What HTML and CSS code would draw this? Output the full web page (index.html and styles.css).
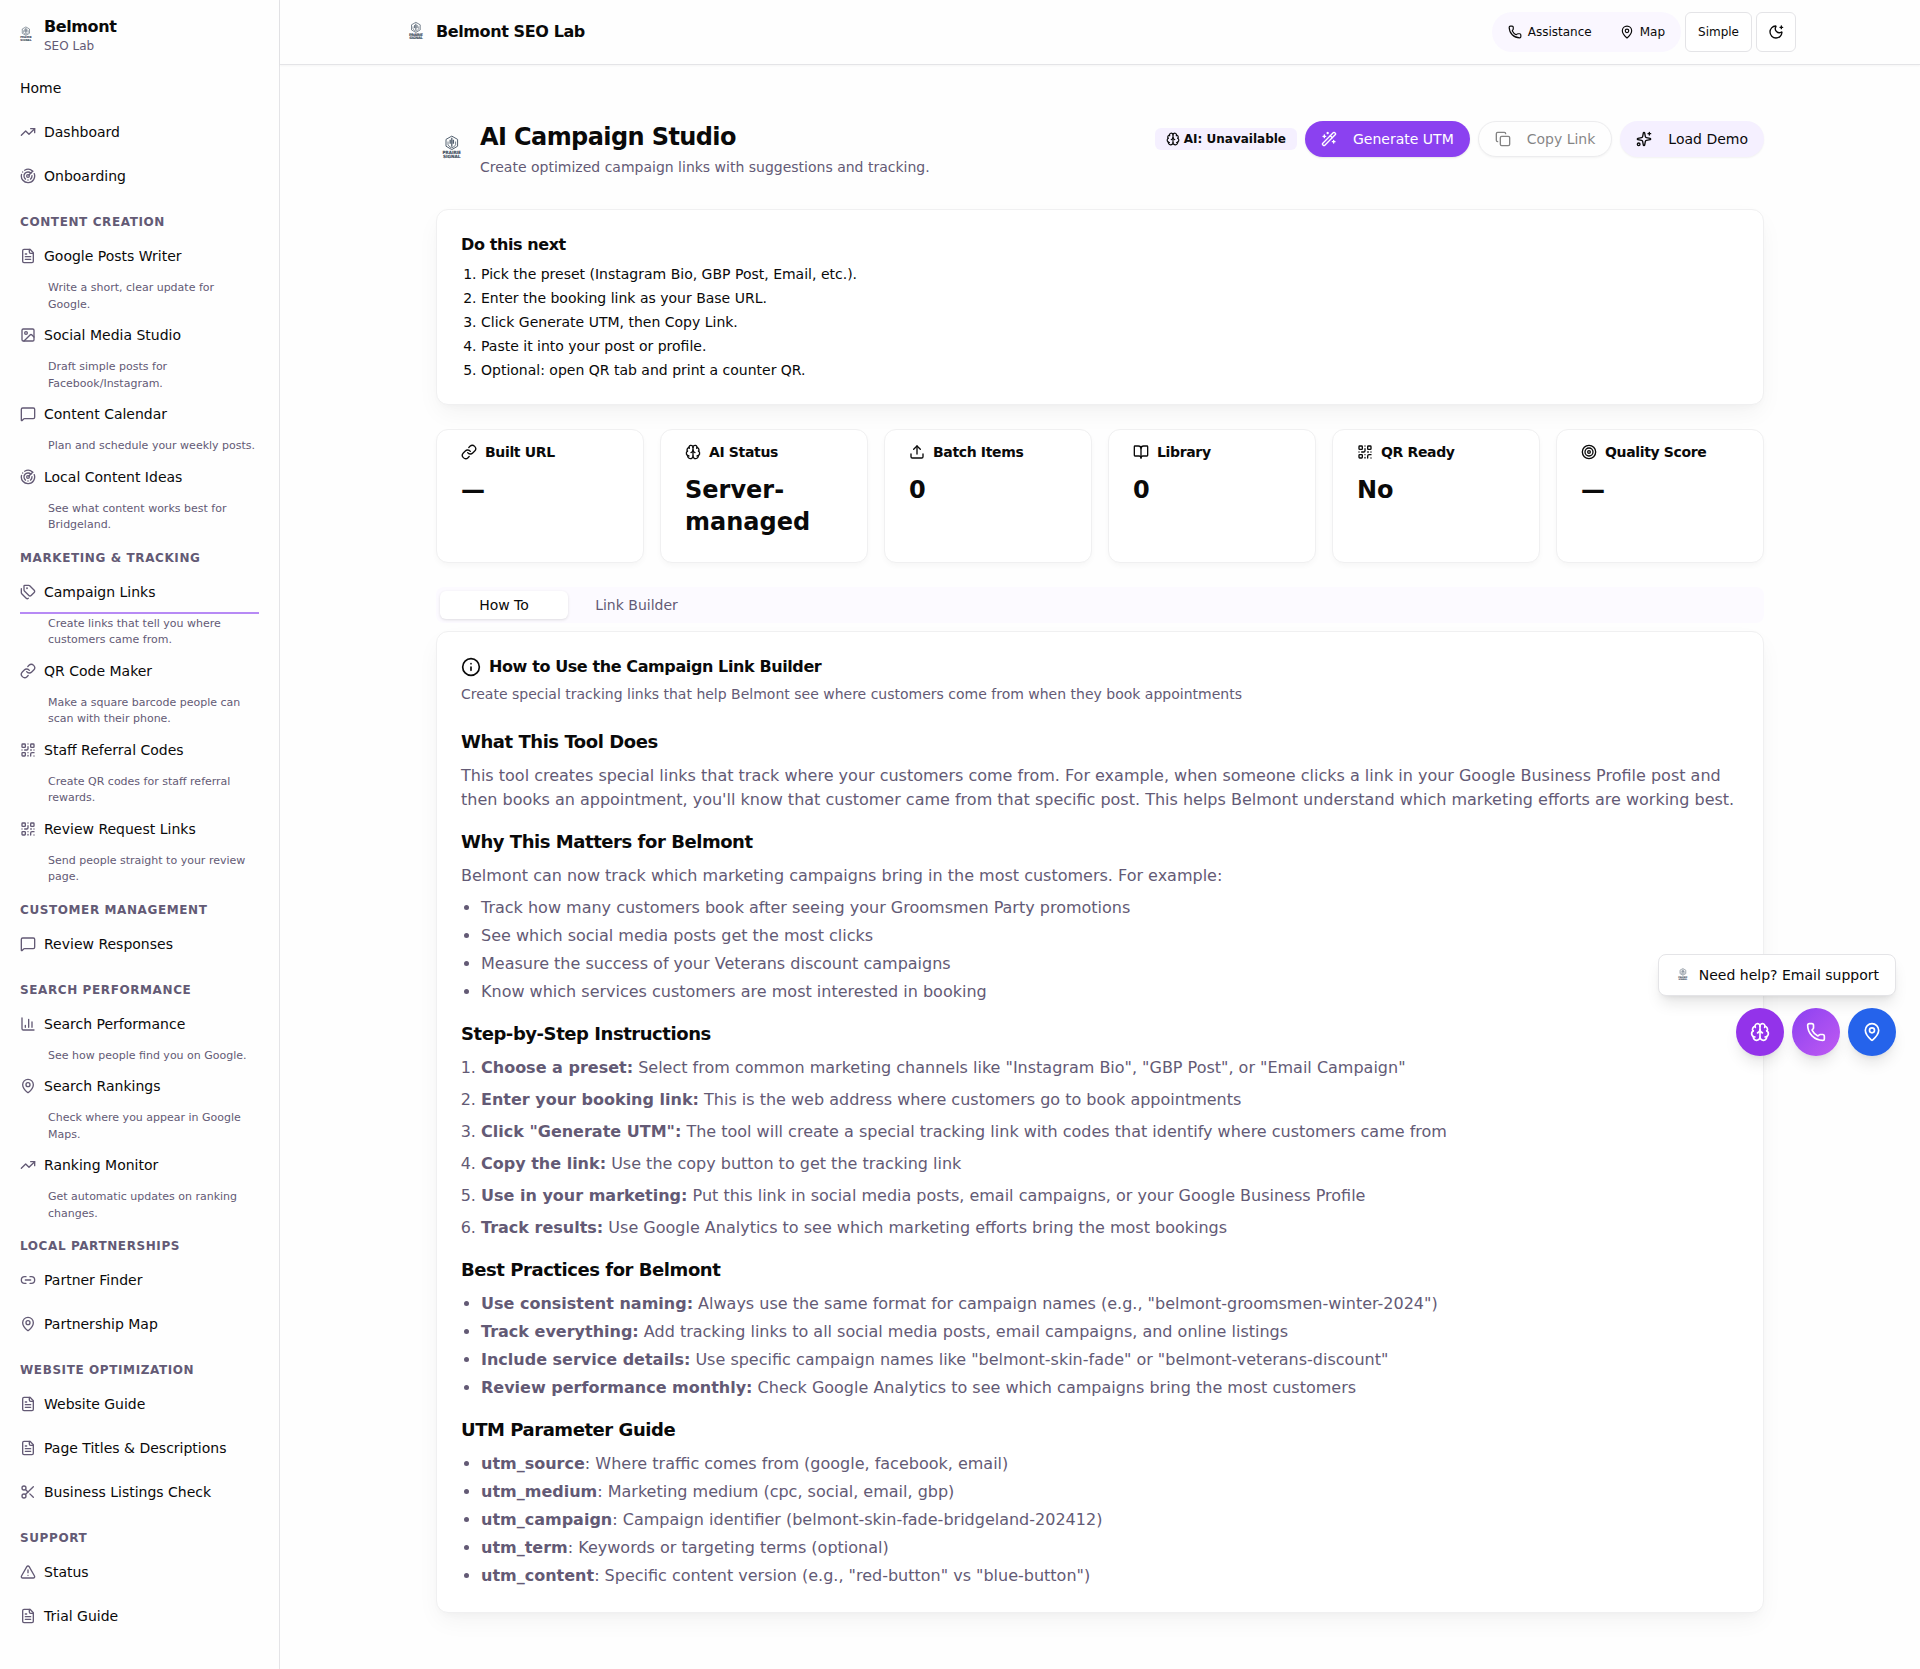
FILE: index.html
```html
<!DOCTYPE html>
<html lang="en">
<head>
<meta charset="utf-8">
<title>AI Campaign Studio - Belmont SEO Lab</title>
<link rel="stylesheet" href="styles.css">
</head>
<body>
<svg class="sprite" aria-hidden="true">
  <symbol id="logo" viewBox="0 0 32 32">
    <g fill="none" stroke="#52606f" stroke-width="1">
      <path d="M15.800 3.100 21.600 6.400v6.800l-5.800 3.400-5.800-3.400V6.400z"/>
      <path d="M15.800 4.800v9M14.200 6.800v4M17.400 6.800v4" stroke-width="1.300"/>
      <path d="M12 8.500v3.300q2 3 3.800 3 2-.2 3.800-3V8.500" stroke-width=".8"/>
    </g>
    <g fill="#3f4d5d" stroke="#3f4d5d" stroke-width=".15" font-family="DejaVu Sans" font-weight="bold" font-size="4.400">
      <text x="6.600" y="21.300" textLength="18.300" lengthAdjust="spacingAndGlyphs">PRAIRIE</text>
      <text x="6.900" y="25.300" textLength="17.700" lengthAdjust="spacingAndGlyphs">SIGNAL</text>
    </g>
  </symbol>
  <symbol id="trend" viewBox="0 0 24 24"><path d="M16 7h6v6"/><path d="m22 7-8.500 8.500-5-5L2 17"/></symbol>
  <symbol id="radar" viewBox="0 0 24 24"><path d="M19.070 4.930A10 10 0 0 0 6.990 3.340"/><path d="M4 6h.01"/><path d="M2.290 9.620A10 10 0 1 0 21.310 8.350"/><path d="M16.240 7.760A6 6 0 1 0 8.230 16.670"/><path d="M12 18h.01"/><path d="M17.990 11.660A6 6 0 0 1 15.770 16.670"/><circle cx="12" cy="12" r="2"/><path d="m13.410 10.590 5.660-5.660"/></symbol>
  <symbol id="file" viewBox="0 0 24 24"><path d="M15 2H6a2 2 0 0 0-2 2v16a2 2 0 0 0 2 2h12a2 2 0 0 0 2-2V7Z"/><path d="M14 2v4a2 2 0 0 0 2 2h4"/><path d="M10 9H8M16 13H8M16 17H8"/></symbol>
  <symbol id="image" viewBox="0 0 24 24"><rect width="18" height="18" x="3" y="3" rx="2"/><circle cx="9" cy="9" r="2"/><path d="m21 15-3.086-3.086a2 2 0 0 0-2.828 0L6 21"/></symbol>
  <symbol id="message" viewBox="0 0 24 24"><path d="M22 17a2 2 0 0 1-2 2H6.828a2 2 0 0 0-1.414.586l-2.202 2.202A.71.71 0 0 1 2 21.286V5a2 2 0 0 1 2-2h16a2 2 0 0 1 2 2z"/></symbol>
  <symbol id="tags" viewBox="0 0 24 24"><path d="M13.172 2a2 2 0 0 1 1.414.586l6.710 6.710a2.400 2.400 0 0 1 0 3.408l-4.592 4.592a2.400 2.400 0 0 1-3.408 0l-6.710-6.710A2 2 0 0 1 6 9.172V3a1 1 0 0 1 1-1z"/><path d="M2 7v6.172a2 2 0 0 0 .586 1.414l6.710 6.710a2.400 2.400 0 0 0 3.191.193"/><circle cx="10.500" cy="6.500" r=".5" fill="currentColor"/></symbol>
  <symbol id="link" viewBox="0 0 24 24"><path d="M10 13a5 5 0 0 0 7.540.54l3-3a5 5 0 0 0-7.070-7.070l-1.720 1.710"/><path d="M14 11a5 5 0 0 0-7.540-.54l-3 3a5 5 0 0 0 7.070 7.070l1.710-1.710"/></symbol>
  <symbol id="qr" viewBox="0 0 24 24"><rect width="5" height="5" x="3" y="3" rx="1"/><rect width="5" height="5" x="16" y="3" rx="1"/><rect width="5" height="5" x="3" y="16" rx="1"/><path d="M21 16h-3a2 2 0 0 0-2 2v3"/><path d="M21 21v.01"/><path d="M12 7v3a2 2 0 0 1-2 2H7"/><path d="M3 12h.01M12 3h.01M12 16v.01M16 12h1M21 12v.01M12 21v-1"/></symbol>
  <symbol id="chart" viewBox="0 0 24 24"><path d="M3 3v16a2 2 0 0 0 2 2h16"/><path d="M18 17V9M13 17V5M8 17v-3"/></symbol>
  <symbol id="pin" viewBox="0 0 24 24"><path d="M20 10c0 4.993-5.539 10.193-7.399 11.799a1 1 0 0 1-1.202 0C9.539 20.193 4 14.993 4 10a8 8 0 0 1 16 0"/><circle cx="12" cy="10" r="3"/></symbol>
  <symbol id="link2" viewBox="0 0 24 24"><path d="M9 17H7A5 5 0 0 1 7 7h2"/><path d="M15 7h2a5 5 0 1 1 0 10h-2"/><path d="M8 12h8"/></symbol>
  <symbol id="scissors" viewBox="0 0 24 24"><circle cx="6" cy="6" r="3"/><path d="M8.120 8.120 12 12"/><path d="M20 4 8.120 15.880"/><circle cx="6" cy="18" r="3"/><path d="M14.800 14.800 20 20"/></symbol>
  <symbol id="alert" viewBox="0 0 24 24"><path d="m21.730 18-8-14a2 2 0 0 0-3.480 0l-8 14A2 2 0 0 0 4 21h16a2 2 0 0 0 1.730-3"/><path d="M12 9v4M12 17h.01"/></symbol>
  <symbol id="phone" viewBox="0 0 24 24"><path d="M13.832 16.568a1 1 0 0 0 1.213-.303l.355-.465A2 2 0 0 1 17 15h3a2 2 0 0 1 2 2v3a2 2 0 0 1-2 2A18 18 0 0 1 2 4a2 2 0 0 1 2-2h3a2 2 0 0 1 2 2v3a2 2 0 0 1-.8 1.600l-.468.351a1 1 0 0 0-.292 1.233 14 14 0 0 0 6.392 6.384"/></symbol>
  <symbol id="moon" viewBox="0 0 24 24"><path d="M18 5h4M20 3v4"/><path d="M20.985 12.486a9 9 0 1 1-9.473-9.472c.405-.022.617.46.402.803a6 6 0 0 0 8.268 8.268c.344-.215.825-.004.803.401"/></symbol>
  <symbol id="brain" viewBox="0 0 24 24"><path d="M12 18V5"/><path d="M15 13a4.170 4.170 0 0 1-3-4 4.170 4.170 0 0 1-3 4"/><path d="M17.598 6.500A3 3 0 1 0 12 5a3 3 0 1 0-5.598 1.500"/><path d="M17.997 5.125a4 4 0 0 1 2.526 5.770"/><path d="M18 18a4 4 0 0 0 2-7.464"/><path d="M19.967 17.483A4 4 0 1 1 12 18a4 4 0 1 1-7.967-.517"/><path d="M6 18a4 4 0 0 1-2-7.464"/><path d="M6.003 5.125a4 4 0 0 0-2.526 5.770"/></symbol>
  <symbol id="wand" viewBox="0 0 24 24"><path d="m21.640 3.640-1.280-1.280a1.210 1.210 0 0 0-1.720 0L2.360 18.640a1.210 1.210 0 0 0 0 1.720l1.280 1.280a1.200 1.200 0 0 0 1.720 0L21.640 5.360a1.200 1.200 0 0 0 0-1.720"/><path d="m14 7 3 3M5 6v4M19 14v4M10 2v2M7 8H3M21 16h-4M11 3H9"/></symbol>
  <symbol id="copy" viewBox="0 0 24 24"><rect width="14" height="14" x="8" y="8" rx="2"/><path d="M4 16c-1.100 0-2-.9-2-2V4c0-1.100.9-2 2-2h10c1.100 0 2 .9 2 2"/></symbol>
  <symbol id="sparkles" viewBox="0 0 24 24"><path d="M11.017 2.814a1 1 0 0 1 1.966 0l1.051 5.558a2 2 0 0 0 1.594 1.594l5.558 1.051a1 1 0 0 1 0 1.966l-5.558 1.051a2 2 0 0 0-1.594 1.594l-1.051 5.558a1 1 0 0 1-1.966 0l-1.051-5.558a2 2 0 0 0-1.594-1.594l-5.558-1.051a1 1 0 0 1 0-1.966l5.558-1.051a2 2 0 0 0 1.594-1.594z"/><path d="M20 2v4M22 4h-4"/><circle cx="4" cy="20" r="2"/></symbol>
  <symbol id="upload" viewBox="0 0 24 24"><path d="M12 3v12"/><path d="m17 8-5-5-5 5"/><path d="M21 15v4a2 2 0 0 1-2 2H5a2 2 0 0 1-2-2v-4"/></symbol>
  <symbol id="book" viewBox="0 0 24 24"><path d="M12 7v14"/><path d="M3 18a1 1 0 0 1-1-1V4a1 1 0 0 1 1-1h5a4 4 0 0 1 4 4 4 4 0 0 1 4-4h5a1 1 0 0 1 1 1v13a1 1 0 0 1-1 1h-6a3 3 0 0 0-3 3 3 3 0 0 0-3-3z"/></symbol>
  <symbol id="target" viewBox="0 0 24 24"><circle cx="12" cy="12" r="10"/><circle cx="12" cy="12" r="6"/><circle cx="12" cy="12" r="2"/></symbol>
  <symbol id="info" viewBox="0 0 24 24"><circle cx="12" cy="12" r="10"/><path d="M12 16v-4M12 8h.01"/></symbol>
</svg>

<div class="app">
  <aside class="sidebar">
    <div class="brand">
      <svg class="logo logo-sm"><use href="#logo"/></svg>
      <div><div class="brand-name">Belmont</div><div class="brand-sub">SEO Lab</div></div>
    </div>
    <nav>
      <a class="nav-link">Home</a>
      <a class="nav-link"><svg class="icon"><use href="#trend"/></svg>Dashboard</a>
      <a class="nav-link"><svg class="icon"><use href="#radar"/></svg>Onboarding</a>

      <h2 class="nav-title">Content Creation</h2>
      <a class="nav-link"><svg class="icon"><use href="#file"/></svg>Google Posts Writer</a>
      <p class="nav-desc">Write a short, clear update for Google.</p>
      <a class="nav-link"><svg class="icon"><use href="#image"/></svg>Social Media Studio</a>
      <p class="nav-desc">Draft simple posts for Facebook/Instagram.</p>
      <a class="nav-link"><svg class="icon"><use href="#message"/></svg>Content Calendar</a>
      <p class="nav-desc">Plan and schedule your weekly posts.</p>
      <a class="nav-link"><svg class="icon"><use href="#radar"/></svg>Local Content Ideas</a>
      <p class="nav-desc">See what content works best for Bridgeland.</p>

      <h2 class="nav-title">Marketing &amp; Tracking</h2>
      <a class="nav-link active"><svg class="icon"><use href="#tags"/></svg>Campaign Links</a>
      <p class="nav-desc">Create links that tell you where customers came from.</p>
      <a class="nav-link"><svg class="icon"><use href="#link"/></svg>QR Code Maker</a>
      <p class="nav-desc">Make a square barcode people can scan with their phone.</p>
      <a class="nav-link"><svg class="icon"><use href="#qr"/></svg>Staff Referral Codes</a>
      <p class="nav-desc">Create QR codes for staff referral rewards.</p>
      <a class="nav-link"><svg class="icon"><use href="#qr"/></svg>Review Request Links</a>
      <p class="nav-desc">Send people straight to your review page.</p>

      <h2 class="nav-title">Customer Management</h2>
      <a class="nav-link"><svg class="icon"><use href="#message"/></svg>Review Responses</a>

      <h2 class="nav-title">Search Performance</h2>
      <a class="nav-link"><svg class="icon"><use href="#chart"/></svg>Search Performance</a>
      <p class="nav-desc">See how people find you on Google.</p>
      <a class="nav-link"><svg class="icon"><use href="#pin"/></svg>Search Rankings</a>
      <p class="nav-desc">Check where you appear in Google Maps.</p>
      <a class="nav-link"><svg class="icon"><use href="#trend"/></svg>Ranking Monitor</a>
      <p class="nav-desc">Get automatic updates on ranking changes.</p>

      <h2 class="nav-title">Local Partnerships</h2>
      <a class="nav-link"><svg class="icon"><use href="#link2"/></svg>Partner Finder</a>
      <a class="nav-link"><svg class="icon"><use href="#pin"/></svg>Partnership Map</a>

      <h2 class="nav-title">Website Optimization</h2>
      <a class="nav-link"><svg class="icon"><use href="#file"/></svg>Website Guide</a>
      <a class="nav-link"><svg class="icon"><use href="#file"/></svg>Page Titles &amp; Descriptions</a>
      <a class="nav-link"><svg class="icon"><use href="#scissors"/></svg>Business Listings Check</a>

      <h2 class="nav-title">Support</h2>
      <a class="nav-link"><svg class="icon"><use href="#alert"/></svg>Status</a>
      <a class="nav-link"><svg class="icon"><use href="#file"/></svg>Trial Guide</a>
    </nav>
  </aside>

  <div class="page">
    <header class="topbar">
      <div class="topbar-inner">
        <div class="topbar-brand"><svg class="logo logo-md"><use href="#logo"/></svg>Belmont SEO Lab</div>
        <div class="topbar-actions">
          <div class="contact-pill">
            <a><svg class="icon"><use href="#phone"/></svg>Assistance</a>
            <a><svg class="icon"><use href="#pin"/></svg>Map</a>
          </div>
          <button class="top-btn">Simple</button>
          <button class="top-btn square"><svg class="icon"><use href="#moon"/></svg></button>
        </div>
      </div>
    </header>

    <main class="content">
      <div class="page-head">
        <svg class="logo logo-lg"><use href="#logo"/></svg>
        <div class="page-title">
          <h1>AI Campaign Studio</h1>
          <p>Create optimized campaign links with suggestions and tracking.</p>
        </div>
        <div class="actions">
          <span class="badge"><svg class="icon"><use href="#brain"/></svg>AI: Unavailable</span>
          <button class="btn primary"><svg class="icon"><use href="#wand"/></svg>Generate UTM</button>
          <button class="btn outline"><svg class="icon"><use href="#copy"/></svg>Copy Link</button>
          <button class="btn soft"><svg class="icon"><use href="#sparkles"/></svg>Load Demo</button>
        </div>
      </div>

      <section class="card next">
        <h2 class="card-title">Do this next</h2>
        <ol>
          <li>Pick the preset (Instagram Bio, GBP Post, Email, etc.).</li>
          <li>Enter the booking link as your Base URL.</li>
          <li>Click Generate UTM, then Copy Link.</li>
          <li>Paste it into your post or profile.</li>
          <li>Optional: open QR tab and print a counter QR.</li>
        </ol>
      </section>

      <section class="stats">
        <div class="stat"><h3><svg class="icon"><use href="#link"/></svg>Built URL</h3><p>—</p></div>
        <div class="stat"><h3><svg class="icon"><use href="#brain"/></svg>AI Status</h3><p>Server-managed</p></div>
        <div class="stat"><h3><svg class="icon"><use href="#upload"/></svg>Batch Items</h3><p>0</p></div>
        <div class="stat"><h3><svg class="icon"><use href="#book"/></svg>Library</h3><p>0</p></div>
        <div class="stat"><h3><svg class="icon"><use href="#qr"/></svg>QR Ready</h3><p>No</p></div>
        <div class="stat"><h3><svg class="icon"><use href="#target"/></svg>Quality Score</h3><p>—</p></div>
      </section>

      <div class="tabs">
        <button class="tab selected">How To</button>
        <button class="tab">Link Builder</button>
      </div>

      <section class="card guide">
        <h2 class="card-title"><svg class="icon"><use href="#info"/></svg>How to Use the Campaign Link Builder</h2>
        <p class="card-desc">Create special tracking links that help Belmont see where customers come from when they book appointments</p>

        <div class="guide-body">
          <section>
            <h3>What This Tool Does</h3>
            <p>This tool creates special links that track where your customers come from. For example, when someone clicks a link in your Google Business Profile post and then books an appointment, you'll know that customer came from that specific post. This helps Belmont understand which marketing efforts are working best.</p>
          </section>
          <section>
            <h3>Why This Matters for Belmont</h3>
            <p>Belmont can now track which marketing campaigns bring in the most customers. For example:</p>
            <ul>
              <li>Track how many customers book after seeing your Groomsmen Party promotions</li>
              <li>See which social media posts get the most clicks</li>
              <li>Measure the success of your Veterans discount campaigns</li>
              <li>Know which services customers are most interested in booking</li>
            </ul>
          </section>
          <section>
            <h3>Step-by-Step Instructions</h3>
            <ol>
              <li><strong>Choose a preset:</strong> Select from common marketing channels like "Instagram Bio", "GBP Post", or "Email Campaign"</li>
              <li><strong>Enter your booking link:</strong> This is the web address where customers go to book appointments</li>
              <li><strong>Click "Generate UTM":</strong> The tool will create a special tracking link with codes that identify where customers came from</li>
              <li><strong>Copy the link:</strong> Use the copy button to get the tracking link</li>
              <li><strong>Use in your marketing:</strong> Put this link in social media posts, email campaigns, or your Google Business Profile</li>
              <li><strong>Track results:</strong> Use Google Analytics to see which marketing efforts bring the most bookings</li>
            </ol>
          </section>
          <section>
            <h3>Best Practices for Belmont</h3>
            <ul>
              <li><strong>Use consistent naming:</strong> Always use the same format for campaign names (e.g., "belmont-groomsmen-winter-2024")</li>
              <li><strong>Track everything:</strong> Add tracking links to all social media posts, email campaigns, and online listings</li>
              <li><strong>Include service details:</strong> Use specific campaign names like "belmont-skin-fade" or "belmont-veterans-discount"</li>
              <li><strong>Review performance monthly:</strong> Check Google Analytics to see which campaigns bring the most customers</li>
            </ul>
          </section>
          <section>
            <h3>UTM Parameter Guide</h3>
            <ul>
              <li><strong>utm_source</strong>: Where traffic comes from (google, facebook, email)</li>
              <li><strong>utm_medium</strong>: Marketing medium (cpc, social, email, gbp)</li>
              <li><strong>utm_campaign</strong>: Campaign identifier (belmont-skin-fade-bridgeland-202412)</li>
              <li><strong>utm_term</strong>: Keywords or targeting terms (optional)</li>
              <li><strong>utm_content</strong>: Specific content version (e.g., "red-button" vs "blue-button")</li>
            </ul>
          </section>
        </div>
      </section>
    </main>
  </div>
</div>

<div class="help">
  <a class="help-tip"><svg class="logo"><use href="#logo"/></svg>Need help? Email support</a>
  <div class="help-buttons">
    <button class="fab fab-ai"><svg class="icon"><use href="#brain"/></svg></button>
    <button class="fab fab-call"><svg class="icon"><use href="#phone"/></svg></button>
    <button class="fab fab-map"><svg class="icon"><use href="#pin"/></svg></button>
  </div>
</div>
</body>
</html>
```
FILE: styles.css
```css
:root {
  --ink: #0a0a0a;
  --muted: #635a75;
  --line: #e4e4e7;
  --card-line: #f0f0f1;
  --soft: #f5f0ff;
}

* { box-sizing: border-box; margin: 0; padding: 0; }

body {
  font-family: "DejaVu Sans", sans-serif;
  font-size: 14px;
  line-height: 20px;
  color: var(--ink);
  background: #fefefe;
}

button { font: inherit; color: inherit; background: none; border: 0; }

.sprite { display: none; }

.icon {
  width: 16px;
  height: 16px;
  flex: none;
  fill: none;
  stroke: currentColor;
  stroke-width: 2;
  stroke-linecap: round;
  stroke-linejoin: round;
}

.logo { width: 16px; height: 16px; flex: none; }
.logo-sm { width: 20px; height: 20px; }
.logo-md { width: 24px; height: 24px; }
.logo-lg { width: 32px; height: 32px; }

.app { display: flex; height: 1669px; overflow: hidden; }

/* Sidebar */
.sidebar {
  width: 280px;
  flex: none;
  border-right: 1px solid var(--line);
}

.brand {
  display: flex;
  align-items: center;
  gap: 8px;
  height: 66px;
  padding: 4px 16px 0;
}
.brand-name { padding-top: 2px; font-size: 16px; font-weight: 700; line-height: 20px; letter-spacing: -0.4px; }
.brand-sub { font-size: 12px; line-height: 18px; color: var(--muted); }

nav { padding: 0 20px; }

.nav-link {
  display: flex;
  align-items: center;
  gap: 8px;
  height: 44px;
}
.nav-link .icon { color: var(--muted); }
.nav-link.active { box-shadow: inset 0 -2px 0 #b78af5; }

.nav-title {
  padding: 16px 0 4px;
  font-size: 12px;
  line-height: 16px;
  font-weight: 700;
  letter-spacing: 0.6px;
  text-transform: uppercase;
  color: var(--muted);
}

.nav-desc {
  padding: 2px 0 0 28px;
  font-size: 11px;
  line-height: 16.5px;
  color: var(--muted);
}

/* Top bar */
.page { flex: 1; min-width: 0; }

.topbar {
  height: 65px;
  border-bottom: 1px solid var(--line);
  box-shadow: 0 1px 2px rgba(0, 0, 0, 0.04);
}
.topbar-inner {
  width: 1392px;
  height: 64px;
  margin: 0 auto;
  display: flex;
  align-items: center;
  justify-content: space-between;
}
.topbar-brand {
  display: flex;
  align-items: center;
  gap: 8px;
  font-size: 16px;
  font-weight: 700;
  letter-spacing: -0.4px;
}
.topbar-actions {
  display: flex;
  gap: 4px;
  font-size: 12px;
}
.contact-pill {
  display: flex;
  align-items: center;
  gap: 28px;
  height: 40px;
  padding: 0 16px;
  border-radius: 20px;
  background: #faf7ff;
}
.contact-pill a { display: flex; align-items: center; gap: 6px; }
.contact-pill .icon { width: 14px; height: 14px; }
.top-btn {
  display: flex;
  align-items: center;
  justify-content: center;
  height: 40px;
  padding: 0 12px;
  border: 1px solid var(--line);
  border-radius: 6px;
  background: #fff;
}
.top-btn.square { width: 40px; padding: 0; }

/* Page heading */
.content { width: 1328px; margin: 0 auto; padding-top: 56px; }

.page-head {
  display: flex;
  align-items: center;
  gap: 12px;
  height: 56px;
  margin-bottom: 32px;
}
.page-title { flex: 1; }
.page-title h1 { font-size: 24px; line-height: 32px; margin-bottom: 4px; letter-spacing: -0.6px; }
.page-title p { color: var(--muted); }

.actions {
  display: flex;
  align-items: center;
  align-self: flex-start;
  gap: 8px;
}
.badge {
  display: flex;
  align-items: center;
  gap: 4px;
  height: 22px;
  padding: 0 11px;
  border-radius: 6px;
  background: var(--soft);
  font-size: 12px;
  font-weight: 700;
}
.badge .icon { width: 14px; height: 14px; }
.btn {
  display: flex;
  align-items: center;
  gap: 16px;
  height: 36px;
  padding: 0 16px;
  border-radius: 18px;
}
.btn.primary { background: #8b41f0; color: #fff; box-shadow: 0 1px 2px rgba(0, 0, 0, 0.1); }
.btn.outline {
  border: 1px solid #dcdce0;
  background: #fff;
  box-shadow: 0 1px 2px rgba(0, 0, 0, 0.08);
  opacity: 0.5;
}
.btn.soft { background: var(--soft); box-shadow: 0 1px 2px rgba(0, 0, 0, 0.05); }

/* Cards */
.card {
  padding: 24px;
  border: 1px solid var(--card-line);
  border-radius: 12px;
  background: #fff;
  box-shadow: 0 10px 25px -3px rgba(0, 0, 0, 0.05), 0 4px 8px -4px rgba(0, 0, 0, 0.04);
}
.card-title {
  display: flex;
  align-items: center;
  gap: 8px;
  font-size: 16px;
  line-height: 22px;
  letter-spacing: -0.4px;
}
.card-title .icon { width: 20px; height: 20px; }

.next ol { margin-top: 8px; padding-left: 20px; }
.next li + li { margin-top: 4px; }

.stats {
  display: grid;
  grid-template-columns: repeat(6, 1fr);
  gap: 16px;
  margin: 24px 0;
}
.stat {
  padding: 12px 24px 24px;
  border: 1px solid var(--card-line);
  border-radius: 12px;
  background: #fff;
  box-shadow: 0 3px 6px -1px rgba(0, 0, 0, 0.04);
}
.stat h3 {
  display: flex;
  align-items: center;
  gap: 8px;
  margin-bottom: 12px;
  font-size: 14px;
  letter-spacing: -0.35px;
}
.stat p { font-size: 24px; line-height: 32px; font-weight: 700; }

/* Tabs */
.tabs {
  display: flex;
  gap: 4px;
  height: 36px;
  margin-bottom: 8px;
  padding: 4px;
  border-radius: 8px;
  background: #fcfaff;
}
.tab { width: 129px; border-radius: 6px; color: var(--muted); }
.tab.selected { width: 128px; background: #fff; color: var(--ink); box-shadow: 0 1px 3px rgba(0, 0, 0, 0.12); }

/* Guide */
.card-desc { margin-top: 6px; color: var(--muted); }

.guide-body {
  display: flex;
  flex-direction: column;
  gap: 16px;
  margin-top: 24px;
  font-size: 16px;
  line-height: 24px;
  color: var(--muted);
}
.guide-body h3 { margin-bottom: 8px; font-size: 18px; line-height: 28px; letter-spacing: -0.45px; color: var(--ink); }
.guide-body p + ul { margin-top: 8px; }
.guide-body ul, .guide-body ol { padding-left: 20px; }
.guide-body ul li + li { margin-top: 4px; }
.guide-body ol li + li { margin-top: 8px; }

/* Floating help */
.help {
  position: absolute;
  top: 954px;
  right: 24px;
  display: flex;
  flex-direction: column;
  align-items: flex-end;
  gap: 12px;
}
.help-tip {
  display: flex;
  align-items: center;
  gap: 8px;
  height: 42px;
  padding: 0 16px;
  border: 1px solid var(--line);
  border-radius: 8px;
  background: #fff;
  box-shadow: 0 10px 15px -3px rgba(0, 0, 0, 0.1), 0 4px 6px -4px rgba(0, 0, 0, 0.1);
}
.help-buttons { display: flex; gap: 8px; }
.fab {
  display: flex;
  align-items: center;
  justify-content: center;
  width: 48px;
  height: 48px;
  border-radius: 50%;
  color: #fff;
  box-shadow: 0 10px 15px -3px rgba(0, 0, 0, 0.1), 0 4px 6px -4px rgba(0, 0, 0, 0.1);
}
.fab .icon { width: 20px; height: 20px; }
.fab-ai { background: #9333ea; }
.fab-call { background: linear-gradient(135deg, #8b41f0, #c05bf2); }
.fab-map { background: #2563eb; }
```
